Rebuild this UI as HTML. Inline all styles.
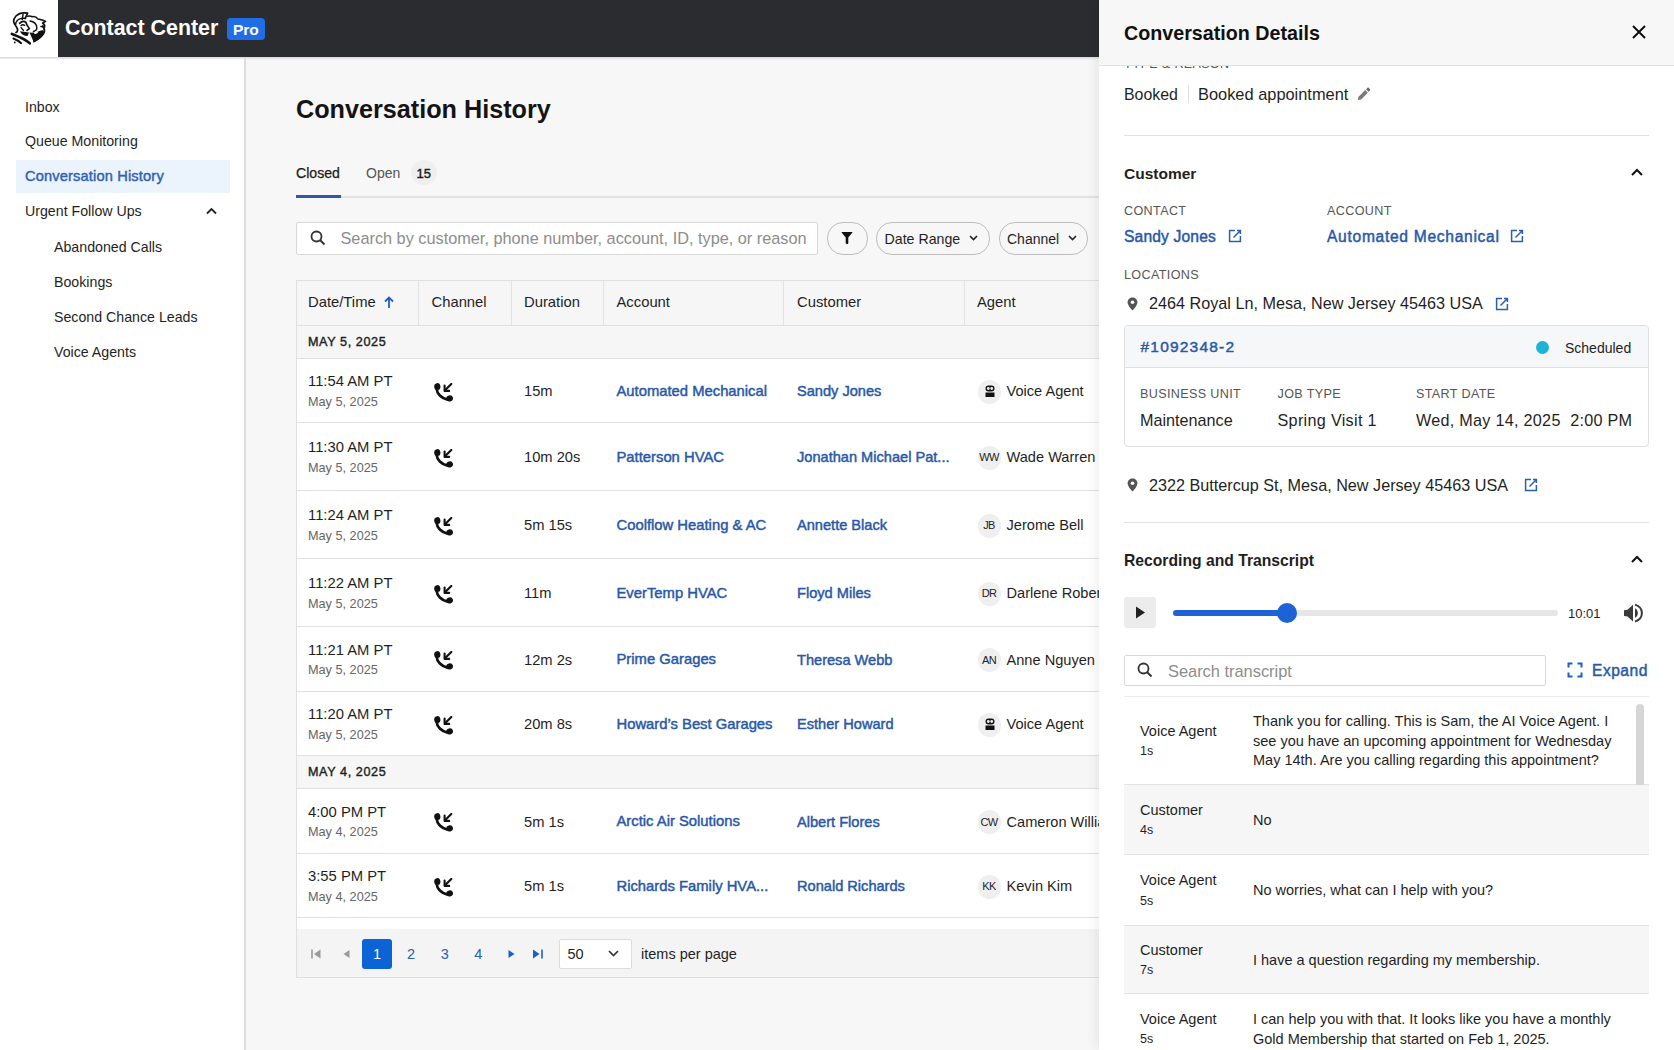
<!DOCTYPE html>
<html><head><meta charset="utf-8">
<style>
*{box-sizing:border-box}
html,body{margin:0;padding:0}
body{width:1674px;height:1050px;overflow:hidden;position:relative;background:#f7f7f7;font-family:"Liberation Sans",sans-serif;color:#1f1f1f}
.a{position:absolute}
.t{position:absolute;white-space:nowrap;line-height:1}
.b{font-weight:bold}
.lnk{color:#2858a8;font-weight:bold}
.sb{color:#2858a8;font-weight:normal;-webkit-text-stroke:0.45px #2858a8}
.hl{position:absolute;background:#e2e2e2}
.vl{position:absolute;background:#e2e2e2}
</style></head>
<body>
<!-- TOP BAR -->
<div class="a" style="left:0;top:0;width:1674px;height:57px;background:#2b2c30"></div>
<div class="a" style="left:0;top:57px;width:1674px;height:3px;background:linear-gradient(#d9d9d9,rgba(247,247,247,0))"></div>
<div class="a" style="left:0;top:0;width:58px;height:57px;background:#fff"></div>
<!--LOGO--><svg class="a" style="left:0;top:0" width="58" height="57" viewBox="0 0 58 57">
<g fill="none" stroke="#111" stroke-linecap="round" stroke-linejoin="round">
<path d="M16 32.6 C18 31.5 18 29.5 16.5 27 C13.5 23 12 20.5 16 16 C19 13 23 12.3 27.6 13.2 L25.3 18.2" stroke-width="1.7"/>
<path d="M15.6 24.4 C15.8 21.5 17.5 19.5 20.5 18.6 C22.5 18 24 18 25.5 18.5" stroke-width="1.5"/>
<path d="M23 14.5 L22.2 19.5" stroke-width="1.5"/>
<path d="M19.6 23.4 C21 21.8 22.5 21.2 24 21.4 C25.5 21.7 26.5 23 26.8 24.8 L29.4 28.6 L27 30.4" stroke-width="1.6"/>
<path d="M21 25.5 C22 24.6 23.5 24.6 24.6 25.4" stroke-width="1.3"/>
<path d="M21 27.5 L23.5 30.5" stroke-width="1.2"/>
<path d="M27.8 16.2 C29.5 15.8 31 16 32.2 16.8 C34 16 36.5 17.2 38 19 C40 19.5 43 20 45.6 21.4 L42.6 23 C44 24 45 25.5 44.6 27 L41 26.5" stroke-width="1.6"/>
<path d="M42.8 26 C44.5 28.5 45 31 43.5 33.5 C41.5 37 38 39.5 34 41.5" stroke-width="1.9"/>
<path d="M30 21 C33.5 21.5 36.5 24 36.8 27.5 C37 29.5 35.5 31 33.5 31.5" stroke-width="1.4"/>
<path d="M11.8 33.8 C15 35.5 19 36.5 22.5 38.5 C25.5 40 28 41.8 29.8 43.3" stroke-width="2.6"/>
<path d="M13.4 38.5 C16 39.5 19 41.2 21.2 43.2" stroke-width="2"/>
</g>
<circle cx="14.8" cy="42.4" r="0.9" fill="#111"/>
<path d="M20 31.2 C21 34 24 36 27.6 36 L29 32.5 L25.5 32 Z" fill="#111"/>
<path d="M29.5 32.5 C33 33 38 32 42.5 30 L44 32 C42 36.5 38 40.5 33.8 42.2 C32.5 39 31 36 29.5 32.5 Z" fill="#111"/>
<ellipse cx="36" cy="32.6" rx="2.2" ry="1.2" transform="rotate(-20 36 32.6)" fill="#fff"/>
</svg>
<div class="t b" style="left:65px;top:17.5px;font-size:21.4px;color:#fff">Contact Center</div>
<div class="a" style="left:227px;top:18px;width:38px;height:22px;background:#1f6ee6;border-radius:4px"></div>
<div class="t b" style="left:233px;top:21.5px;font-size:15.5px;color:#fff">Pro</div>

<!-- SIDEBAR -->
<div class="a" style="left:0;top:59px;width:245px;height:991px;background:#fff"></div>
<div class="a" style="left:244px;top:57px;width:2px;height:993px;background:#dcdcdc"></div>
<div class="t" style="left:25px;top:99.5px;font-size:14.2px">Inbox</div>
<div class="t" style="left:25px;top:134.3px;font-size:14.2px">Queue Monitoring</div>
<div class="a" style="left:16px;top:160px;width:214px;height:33px;background:#ebf3fd"></div>
<div class="t sb" style="left:25px;top:168.6px;font-size:14.6px;letter-spacing:0.17px;color:#2f63b5;-webkit-text-stroke-color:#2f63b5">Conversation History</div>
<div class="t" style="left:25px;top:204px;font-size:14.2px">Urgent Follow Ups</div>
<svg class="a" style="left:205px;top:206px" width="13" height="10" viewBox="0 0 13 10"><path d="M2 7.5 L6.5 3 L11 7.5" fill="none" stroke="#222" stroke-width="1.8"/></svg>
<div class="t" style="left:54px;top:240.1px;font-size:14.2px">Abandoned Calls</div>
<div class="t" style="left:54px;top:275.1px;font-size:14.2px">Bookings</div>
<div class="t" style="left:54px;top:310px;font-size:14.2px">Second Chance Leads</div>
<div class="t" style="left:54px;top:344.9px;font-size:14.2px">Voice Agents</div>

<!-- MAIN -->
<div class="t b" style="left:296px;top:97.3px;font-size:25.2px;color:#141414">Conversation History</div>
<div class="t" style="left:296px;top:165.8px;font-size:14.1px;color:#1a1a1a;-webkit-text-stroke:0.25px #1a1a1a">Closed</div>
<div class="t" style="left:366px;top:165.8px;font-size:14px;color:#555">Open</div>
<div class="a" style="left:411px;top:160px;width:26px;height:25px;border-radius:13px;background:#efefef"></div>
<div class="t" style="left:416.5px;top:166.8px;font-size:13px;color:#1a1a1a;-webkit-text-stroke:0.4px #1a1a1a">15</div>
<div class="a" style="left:296px;top:196px;width:803px;height:2px;background:#e2e2e2"></div>
<div class="a" style="left:296px;top:195px;width:45px;height:3px;background:#30599f"></div>

<div class="a" style="left:296px;top:222px;width:522px;height:33px;background:#fff;border:1px solid #d8d8d8;border-radius:2px"></div>
<svg class="a" style="left:309px;top:229px" width="18" height="18" viewBox="0 0 18 18"><circle cx="7.5" cy="7.5" r="5" fill="none" stroke="#333" stroke-width="1.8"/><path d="M11 11 L15.5 15.5" stroke="#333" stroke-width="2"/></svg>
<div class="t" style="left:340.5px;top:229.8px;font-size:16.3px;color:#8d8d8d">Search by customer, phone number, account, ID, type, or reason</div>

<div class="a" style="left:827px;top:222px;width:41px;height:33px;border:1px solid #bdbdbd;border-radius:16px"></div>
<svg class="a" style="left:839px;top:230px" width="16" height="16" viewBox="0 0 16 16"><path d="M2.8 2 H13.2 C13.5 2 13.6 2.3 13.4 2.6 L9.3 7.6 V13 C9.3 14.6 6.7 14.6 6.7 13 V7.6 L2.6 2.6 C2.4 2.3 2.5 2 2.8 2 Z" fill="#111"/></svg>
<div class="a" style="left:876px;top:222px;width:114px;height:33px;border:1px solid #bdbdbd;border-radius:16px"></div>
<div class="t" style="left:884.5px;top:232.2px;font-size:14.2px">Date Range</div>
<svg class="a" style="left:968px;top:234px" width="11" height="8" viewBox="0 0 11 8"><path d="M2 2 L5.5 5.5 L9 2" fill="none" stroke="#222" stroke-width="1.6"/></svg>
<div class="a" style="left:999px;top:222px;width:89px;height:33px;border:1px solid #bdbdbd;border-radius:16px"></div>
<div class="t" style="left:1007px;top:232.2px;font-size:14px">Channel</div>
<svg class="a" style="left:1067px;top:234px" width="11" height="8" viewBox="0 0 11 8"><path d="M2 2 L5.5 5.5 L9 2" fill="none" stroke="#222" stroke-width="1.6"/></svg>

<!--TABLE-->
<div class="a" style="left:296px;top:280px;width:900px;height:46px;background:#f6f6f6;border-top:1px solid #e0e0e0;border-bottom:1px solid #e0e0e0"></div>
<div class="a" style="left:296px;top:280px;width:1px;height:698px;background:#e0e0e0"></div>
<div class="vl" style="left:418px;top:281px;width:1px;height:44px"></div>
<div class="vl" style="left:511px;top:281px;width:1px;height:44px"></div>
<div class="vl" style="left:603px;top:281px;width:1px;height:44px"></div>
<div class="vl" style="left:783px;top:281px;width:1px;height:44px"></div>
<div class="vl" style="left:964px;top:281px;width:1px;height:44px"></div>
<div class="t" style="left:308px;top:295.07px;font-size:14.8px;color:#1f1f1f">Date/Time</div>
<div class="t" style="left:431.5px;top:295.07px;font-size:14.8px;color:#1f1f1f">Channel</div>
<div class="t" style="left:524px;top:295.07px;font-size:14.8px;color:#1f1f1f">Duration</div>
<div class="t" style="left:616.5px;top:295.07px;font-size:14.8px;color:#1f1f1f">Account</div>
<div class="t" style="left:797px;top:295.07px;font-size:14.8px;color:#1f1f1f">Customer</div>
<div class="t" style="left:977px;top:295.07px;font-size:14.8px;color:#1f1f1f">Agent</div>
<svg class="a" style="left:383px;top:295px" width="12" height="14" viewBox="0 0 12 14"><path d="M6 13 V2.5 M2 6.5 L6 2.5 L10 6.5" fill="none" stroke="#1f5fc4" stroke-width="1.8"/></svg>
<div class="a" style="left:297px;top:326px;width:900px;height:33px;background:#f6f6f6;border-bottom:1px solid #e0e0e0"></div>
<div class="t" style="left:308px;top:336.20px;font-size:12.6px;letter-spacing:0.6px;color:#1f1f1f;-webkit-text-stroke:0.4px #1f1f1f">MAY 5, 2025</div>
<div class="a" style="left:297px;top:756px;width:900px;height:33px;background:#f6f6f6;border-bottom:1px solid #e0e0e0"></div>
<div class="t" style="left:308px;top:766.20px;font-size:12.6px;letter-spacing:0.6px;color:#1f1f1f;-webkit-text-stroke:0.4px #1f1f1f">MAY 4, 2025</div>
<div class="a" style="left:297px;top:359px;width:900px;height:64px;background:#fff;border-bottom:1px solid #e2e2e2"></div>
<div class="t" style="left:308px;top:374.47px;font-size:14.8px;color:#1f1f1f">11:54 AM PT</div>
<div class="t" style="left:308px;top:395.75px;font-size:12.7px;color:#666">May 5, 2025</div>
<svg class="a" style="left:434px;top:382.50px" width="19" height="19" viewBox="0 0 19 19"><ellipse cx="3.3" cy="3.6" rx="3.1" ry="3.5" transform="rotate(-10 3.3 3.6)" fill="#111"/><ellipse cx="15.6" cy="15.4" rx="3.4" ry="3.1" transform="rotate(-15 15.6 15.4)" fill="#111"/><path d="M2.6 5.5 C2.8 10.5 7.5 15.5 13.5 16.6" fill="none" stroke="#111" stroke-width="2.7"/><path d="M17.3 0.9 L11.5 6.8" stroke="#111" stroke-width="2.1" stroke-linecap="round"/><path d="M10.6 2.6 V7.9 H15.2" fill="none" stroke="#111" stroke-width="2.1" stroke-linecap="round" stroke-linejoin="round"/></svg>
<div class="t" style="left:524px;top:384.06px;font-size:14.7px;color:#1f1f1f">15m</div>
<div class="t sb" style="left:616.5px;top:383.97px;font-size:14.8px">Automated Mechanical</div>
<div class="t sb" style="left:797px;top:384.14px;font-size:14.6px">Sandy Jones</div>
<div class="a" style="left:977.5px;top:379.50px;width:23px;height:24px;border-radius:12px;background:#efefef"></div>
<svg class="a" style="left:983px;top:384.00px" width="14" height="14" viewBox="0 0 14 14"><rect x="2.5" y="1.5" width="9" height="6" rx="3" fill="#111"/><circle cx="5.3" cy="4.5" r="1.4" fill="#eee"/><circle cx="8.7" cy="4.5" r="1.4" fill="#eee"/><rect x="2.5" y="8.5" width="9" height="4.5" fill="#111"/></svg>
<div class="t" style="left:1006.5px;top:384.14px;font-size:14.6px;color:#1f1f1f">Voice Agent</div>
<div class="a" style="left:297px;top:423px;width:900px;height:68px;background:#fff;border-bottom:1px solid #e2e2e2"></div>
<div class="t" style="left:308px;top:440.47px;font-size:14.8px;color:#1f1f1f">11:30 AM PT</div>
<div class="t" style="left:308px;top:461.75px;font-size:12.7px;color:#666">May 5, 2025</div>
<svg class="a" style="left:434px;top:448.50px" width="19" height="19" viewBox="0 0 19 19"><ellipse cx="3.3" cy="3.6" rx="3.1" ry="3.5" transform="rotate(-10 3.3 3.6)" fill="#111"/><ellipse cx="15.6" cy="15.4" rx="3.4" ry="3.1" transform="rotate(-15 15.6 15.4)" fill="#111"/><path d="M2.6 5.5 C2.8 10.5 7.5 15.5 13.5 16.6" fill="none" stroke="#111" stroke-width="2.7"/><path d="M17.3 0.9 L11.5 6.8" stroke="#111" stroke-width="2.1" stroke-linecap="round"/><path d="M10.6 2.6 V7.9 H15.2" fill="none" stroke="#111" stroke-width="2.1" stroke-linecap="round" stroke-linejoin="round"/></svg>
<div class="t" style="left:524px;top:450.06px;font-size:14.7px;color:#1f1f1f">10m 20s</div>
<div class="t sb" style="left:616.5px;top:449.97px;font-size:14.8px">Patterson HVAC</div>
<div class="t sb" style="left:797px;top:450.14px;font-size:14.6px">Jonathan Michael Pat...</div>
<div class="a" style="left:977.5px;top:445.50px;width:23px;height:24px;border-radius:12px;background:#efefef"></div>
<div class="t" style="left:977.5px;width:23px;text-align:center;top:452.00px;font-size:11px;letter-spacing:-0.6px;color:#222">WW</div>
<div class="t" style="left:1006.5px;top:450.14px;font-size:14.6px;color:#1f1f1f">Wade Warren</div>
<div class="a" style="left:297px;top:491px;width:900px;height:68px;background:#fff;border-bottom:1px solid #e2e2e2"></div>
<div class="t" style="left:308px;top:508.47px;font-size:14.8px;color:#1f1f1f">11:24 AM PT</div>
<div class="t" style="left:308px;top:529.75px;font-size:12.7px;color:#666">May 5, 2025</div>
<svg class="a" style="left:434px;top:516.50px" width="19" height="19" viewBox="0 0 19 19"><ellipse cx="3.3" cy="3.6" rx="3.1" ry="3.5" transform="rotate(-10 3.3 3.6)" fill="#111"/><ellipse cx="15.6" cy="15.4" rx="3.4" ry="3.1" transform="rotate(-15 15.6 15.4)" fill="#111"/><path d="M2.6 5.5 C2.8 10.5 7.5 15.5 13.5 16.6" fill="none" stroke="#111" stroke-width="2.7"/><path d="M17.3 0.9 L11.5 6.8" stroke="#111" stroke-width="2.1" stroke-linecap="round"/><path d="M10.6 2.6 V7.9 H15.2" fill="none" stroke="#111" stroke-width="2.1" stroke-linecap="round" stroke-linejoin="round"/></svg>
<div class="t" style="left:524px;top:518.06px;font-size:14.7px;color:#1f1f1f">5m 15s</div>
<div class="t sb" style="left:616.5px;top:517.97px;font-size:14.8px">Coolflow Heating &amp; AC</div>
<div class="t sb" style="left:797px;top:518.14px;font-size:14.6px">Annette Black</div>
<div class="a" style="left:977.5px;top:513.50px;width:23px;height:24px;border-radius:12px;background:#efefef"></div>
<div class="t" style="left:977.5px;width:23px;text-align:center;top:520.00px;font-size:11px;letter-spacing:-0.6px;color:#222">JB</div>
<div class="t" style="left:1006.5px;top:518.14px;font-size:14.6px;color:#1f1f1f">Jerome Bell</div>
<div class="a" style="left:297px;top:559px;width:900px;height:68px;background:#fff;border-bottom:1px solid #e2e2e2"></div>
<div class="t" style="left:308px;top:576.47px;font-size:14.8px;color:#1f1f1f">11:22 AM PT</div>
<div class="t" style="left:308px;top:597.75px;font-size:12.7px;color:#666">May 5, 2025</div>
<svg class="a" style="left:434px;top:584.50px" width="19" height="19" viewBox="0 0 19 19"><ellipse cx="3.3" cy="3.6" rx="3.1" ry="3.5" transform="rotate(-10 3.3 3.6)" fill="#111"/><ellipse cx="15.6" cy="15.4" rx="3.4" ry="3.1" transform="rotate(-15 15.6 15.4)" fill="#111"/><path d="M2.6 5.5 C2.8 10.5 7.5 15.5 13.5 16.6" fill="none" stroke="#111" stroke-width="2.7"/><path d="M17.3 0.9 L11.5 6.8" stroke="#111" stroke-width="2.1" stroke-linecap="round"/><path d="M10.6 2.6 V7.9 H15.2" fill="none" stroke="#111" stroke-width="2.1" stroke-linecap="round" stroke-linejoin="round"/></svg>
<div class="t" style="left:524px;top:586.06px;font-size:14.7px;color:#1f1f1f">11m</div>
<div class="t sb" style="left:616.5px;top:585.97px;font-size:14.8px">EverTemp HVAC</div>
<div class="t sb" style="left:797px;top:586.14px;font-size:14.6px">Floyd Miles</div>
<div class="a" style="left:977.5px;top:581.50px;width:23px;height:24px;border-radius:12px;background:#efefef"></div>
<div class="t" style="left:977.5px;width:23px;text-align:center;top:588.00px;font-size:11px;letter-spacing:-0.6px;color:#222">DR</div>
<div class="t" style="left:1006.5px;top:586.14px;font-size:14.6px;color:#1f1f1f">Darlene Robertson</div>
<div class="a" style="left:297px;top:627px;width:900px;height:65px;background:#fff;border-bottom:1px solid #e2e2e2"></div>
<div class="t" style="left:308px;top:642.97px;font-size:14.8px;color:#1f1f1f">11:21 AM PT</div>
<div class="t" style="left:308px;top:664.25px;font-size:12.7px;color:#666">May 5, 2025</div>
<svg class="a" style="left:434px;top:651.00px" width="19" height="19" viewBox="0 0 19 19"><ellipse cx="3.3" cy="3.6" rx="3.1" ry="3.5" transform="rotate(-10 3.3 3.6)" fill="#111"/><ellipse cx="15.6" cy="15.4" rx="3.4" ry="3.1" transform="rotate(-15 15.6 15.4)" fill="#111"/><path d="M2.6 5.5 C2.8 10.5 7.5 15.5 13.5 16.6" fill="none" stroke="#111" stroke-width="2.7"/><path d="M17.3 0.9 L11.5 6.8" stroke="#111" stroke-width="2.1" stroke-linecap="round"/><path d="M10.6 2.6 V7.9 H15.2" fill="none" stroke="#111" stroke-width="2.1" stroke-linecap="round" stroke-linejoin="round"/></svg>
<div class="t" style="left:524px;top:652.56px;font-size:14.7px;color:#1f1f1f">12m 2s</div>
<div class="t sb" style="left:616.5px;top:652.47px;font-size:14.8px">Prime Garages</div>
<div class="t sb" style="left:797px;top:652.64px;font-size:14.6px">Theresa Webb</div>
<div class="a" style="left:977.5px;top:648.00px;width:23px;height:24px;border-radius:12px;background:#efefef"></div>
<div class="t" style="left:977.5px;width:23px;text-align:center;top:654.50px;font-size:11px;letter-spacing:-0.6px;color:#222">AN</div>
<div class="t" style="left:1006.5px;top:652.64px;font-size:14.6px;color:#1f1f1f">Anne Nguyen</div>
<div class="a" style="left:297px;top:692px;width:900px;height:64px;background:#fff;border-bottom:1px solid #e2e2e2"></div>
<div class="t" style="left:308px;top:707.47px;font-size:14.8px;color:#1f1f1f">11:20 AM PT</div>
<div class="t" style="left:308px;top:728.75px;font-size:12.7px;color:#666">May 5, 2025</div>
<svg class="a" style="left:434px;top:715.50px" width="19" height="19" viewBox="0 0 19 19"><ellipse cx="3.3" cy="3.6" rx="3.1" ry="3.5" transform="rotate(-10 3.3 3.6)" fill="#111"/><ellipse cx="15.6" cy="15.4" rx="3.4" ry="3.1" transform="rotate(-15 15.6 15.4)" fill="#111"/><path d="M2.6 5.5 C2.8 10.5 7.5 15.5 13.5 16.6" fill="none" stroke="#111" stroke-width="2.7"/><path d="M17.3 0.9 L11.5 6.8" stroke="#111" stroke-width="2.1" stroke-linecap="round"/><path d="M10.6 2.6 V7.9 H15.2" fill="none" stroke="#111" stroke-width="2.1" stroke-linecap="round" stroke-linejoin="round"/></svg>
<div class="t" style="left:524px;top:717.06px;font-size:14.7px;color:#1f1f1f">20m 8s</div>
<div class="t sb" style="left:616.5px;top:716.97px;font-size:14.8px">Howard’s Best Garages</div>
<div class="t sb" style="left:797px;top:717.14px;font-size:14.6px">Esther Howard</div>
<div class="a" style="left:977.5px;top:712.50px;width:23px;height:24px;border-radius:12px;background:#efefef"></div>
<svg class="a" style="left:983px;top:717.00px" width="14" height="14" viewBox="0 0 14 14"><rect x="2.5" y="1.5" width="9" height="6" rx="3" fill="#111"/><circle cx="5.3" cy="4.5" r="1.4" fill="#eee"/><circle cx="8.7" cy="4.5" r="1.4" fill="#eee"/><rect x="2.5" y="8.5" width="9" height="4.5" fill="#111"/></svg>
<div class="t" style="left:1006.5px;top:717.14px;font-size:14.6px;color:#1f1f1f">Voice Agent</div>
<div class="a" style="left:297px;top:789px;width:900px;height:65px;background:#fff;border-bottom:1px solid #e2e2e2"></div>
<div class="t" style="left:308px;top:804.97px;font-size:14.8px;color:#1f1f1f">4:00 PM PT</div>
<div class="t" style="left:308px;top:826.25px;font-size:12.7px;color:#666">May 4, 2025</div>
<svg class="a" style="left:434px;top:813.00px" width="19" height="19" viewBox="0 0 19 19"><ellipse cx="3.3" cy="3.6" rx="3.1" ry="3.5" transform="rotate(-10 3.3 3.6)" fill="#111"/><ellipse cx="15.6" cy="15.4" rx="3.4" ry="3.1" transform="rotate(-15 15.6 15.4)" fill="#111"/><path d="M2.6 5.5 C2.8 10.5 7.5 15.5 13.5 16.6" fill="none" stroke="#111" stroke-width="2.7"/><path d="M17.3 0.9 L11.5 6.8" stroke="#111" stroke-width="2.1" stroke-linecap="round"/><path d="M10.6 2.6 V7.9 H15.2" fill="none" stroke="#111" stroke-width="2.1" stroke-linecap="round" stroke-linejoin="round"/></svg>
<div class="t" style="left:524px;top:814.56px;font-size:14.7px;color:#1f1f1f">5m 1s</div>
<div class="t sb" style="left:616.5px;top:814.47px;font-size:14.8px">Arctic Air Solutions</div>
<div class="t sb" style="left:797px;top:814.64px;font-size:14.6px">Albert Flores</div>
<div class="a" style="left:977.5px;top:810.00px;width:23px;height:24px;border-radius:12px;background:#efefef"></div>
<div class="t" style="left:977.5px;width:23px;text-align:center;top:816.50px;font-size:11px;letter-spacing:-0.6px;color:#222">CW</div>
<div class="t" style="left:1006.5px;top:814.64px;font-size:14.6px;color:#1f1f1f">Cameron Williamson</div>
<div class="a" style="left:297px;top:854px;width:900px;height:64px;background:#fff;border-bottom:1px solid #e2e2e2"></div>
<div class="t" style="left:308px;top:869.47px;font-size:14.8px;color:#1f1f1f">3:55 PM PT</div>
<div class="t" style="left:308px;top:890.75px;font-size:12.7px;color:#666">May 4, 2025</div>
<svg class="a" style="left:434px;top:877.50px" width="19" height="19" viewBox="0 0 19 19"><ellipse cx="3.3" cy="3.6" rx="3.1" ry="3.5" transform="rotate(-10 3.3 3.6)" fill="#111"/><ellipse cx="15.6" cy="15.4" rx="3.4" ry="3.1" transform="rotate(-15 15.6 15.4)" fill="#111"/><path d="M2.6 5.5 C2.8 10.5 7.5 15.5 13.5 16.6" fill="none" stroke="#111" stroke-width="2.7"/><path d="M17.3 0.9 L11.5 6.8" stroke="#111" stroke-width="2.1" stroke-linecap="round"/><path d="M10.6 2.6 V7.9 H15.2" fill="none" stroke="#111" stroke-width="2.1" stroke-linecap="round" stroke-linejoin="round"/></svg>
<div class="t" style="left:524px;top:879.06px;font-size:14.7px;color:#1f1f1f">5m 1s</div>
<div class="t sb" style="left:616.5px;top:878.97px;font-size:14.8px">Richards Family HVA...</div>
<div class="t sb" style="left:797px;top:879.14px;font-size:14.6px">Ronald Richards</div>
<div class="a" style="left:977.5px;top:874.50px;width:23px;height:24px;border-radius:12px;background:#efefef"></div>
<div class="t" style="left:977.5px;width:23px;text-align:center;top:881.00px;font-size:11px;letter-spacing:-0.6px;color:#222">KK</div>
<div class="t" style="left:1006.5px;top:879.14px;font-size:14.6px;color:#1f1f1f">Kevin Kim</div>
<div class="a" style="left:297px;top:918px;width:900px;height:11px;background:#fff"></div>
<div class="a" style="left:297px;top:929px;width:900px;height:49px;background:#f4f4f4;border-bottom:1px solid #dedede"></div>
<svg class="a" style="left:310px;top:948px" width="12" height="12" viewBox="0 0 12 12"><path d="M2 1.5 V10.5" stroke="#9a9a9a" stroke-width="1.6"/><path d="M10.5 1.5 V10.5 L4 6 Z" fill="#9a9a9a"/></svg>
<svg class="a" style="left:340px;top:948px" width="12" height="12" viewBox="0 0 12 12"><path d="M9.5 2 V10 L3.5 6 Z" fill="#9a9a9a"/></svg>
<div class="a" style="left:362px;top:938.5px;width:30px;height:30px;background:#0b63d6;border-radius:3px"></div>
<div class="t" style="left:362px;width:30px;text-align:center;top:947px;font-size:14.5px;color:#fff">1</div>
<div class="t" style="left:396px;width:30px;text-align:center;top:947px;font-size:14.5px;color:#2a5fb0">2</div>
<div class="t" style="left:429.8px;width:30px;text-align:center;top:947px;font-size:14.5px;color:#2a5fb0">3</div>
<div class="t" style="left:463.4px;width:30px;text-align:center;top:947px;font-size:14.5px;color:#2a5fb0">4</div>
<svg class="a" style="left:506px;top:948px" width="12" height="12" viewBox="0 0 12 12"><path d="M2.5 2 V10 L8.5 6 Z" fill="#1f5fc4"/></svg>
<svg class="a" style="left:531px;top:948px" width="13" height="12" viewBox="0 0 13 12"><path d="M11 1.5 V10.5" stroke="#1f5fc4" stroke-width="1.6"/><path d="M2 1.5 V10.5 L8.5 6 Z" fill="#1f5fc4"/></svg>
<div class="a" style="left:559px;top:938.5px;width:73px;height:30px;background:#fff;border:1px solid #dcdcdc;border-radius:2px"></div>
<div class="t" style="left:567.5px;top:947px;font-size:14.5px;color:#1f1f1f">50</div>
<svg class="a" style="left:607px;top:949px" width="13" height="9" viewBox="0 0 13 9"><path d="M2 2 L6.5 6.5 L11 2" fill="none" stroke="#333" stroke-width="1.7"/></svg>
<div class="t" style="left:641px;top:947px;font-size:14.5px;color:#1f1f1f">items per page</div>
<!--DRAWER-->
<div class="a" style="left:1099px;top:0;width:575px;height:1050px;background:#fff;box-shadow:-2px 0 12px rgba(0,0,0,0.08)"></div>
<div class="t" style="left:1124px;top:58.42px;font-size:12.5px;color:#555;letter-spacing:0.35px">TYPE &amp; REASON</div>
<div class="t" style="left:1124px;top:86.54px;font-size:15.9px;">Booked</div>
<div class="a" style="left:1188px;top:85px;width:1px;height:18px;background:#dedede"></div>
<div class="t" style="left:1198px;top:86.12px;font-size:16.4px;">Booked appointment</div>
<svg class="a" style="left:1356px;top:86px" width="15" height="15" viewBox="0 0 15 15"><path d="M1.8 13.9 L2.4 10.9 L9.2 4.1 L11.9 6.8 L5.1 13.6 Z" fill="#7a7a7a"/><path d="M10.1 3.2 L11.4 1.9 C11.8 1.5 12.4 1.5 12.8 1.9 L13.9 3 C14.3 3.4 14.3 4 13.9 4.4 L12.6 5.7 Z" fill="#666"/></svg>
<div class="a" style="left:1124px;top:135px;width:525px;height:1px;background:#e2e2e2"></div>
<div class="t b" style="left:1124px;top:165.98px;font-size:15.5px;">Customer</div>
<svg class="a" style="left:1630px;top:167px" width="14" height="10" viewBox="0 0 14 10"><path d="M2 8 L7 3 L12 8" fill="none" stroke="#111" stroke-width="2"/></svg>
<div class="t" style="left:1124px;top:205.33px;font-size:12.6px;color:#555;letter-spacing:0.35px">CONTACT</div>
<div class="t" style="left:1327px;top:205.33px;font-size:12.6px;color:#555;letter-spacing:0.35px">ACCOUNT</div>
<div class="t sb" style="left:1124px;top:229.19px;font-size:15.6px;letter-spacing:0.16px">Sandy Jones</div>
<svg class="a" style="left:1227.5px;top:229px" width="14" height="14" viewBox="0 0 14 14"><path d="M7 1.6 H1.6 V12.4 H12.4 V7" fill="none" stroke="#2a5fb0" stroke-width="1.5"/><path d="M9 1.6 H12.4 V5 M12.2 1.8 L5.5 8.5" fill="none" stroke="#2a5fb0" stroke-width="1.5"/></svg>
<div class="t sb" style="left:1327px;top:229.19px;font-size:15.6px;letter-spacing:0.7px">Automated Mechanical</div>
<svg class="a" style="left:1510px;top:229px" width="14" height="14" viewBox="0 0 14 14"><path d="M7 1.6 H1.6 V12.4 H12.4 V7" fill="none" stroke="#2a5fb0" stroke-width="1.5"/><path d="M9 1.6 H12.4 V5 M12.2 1.8 L5.5 8.5" fill="none" stroke="#2a5fb0" stroke-width="1.5"/></svg>
<div class="t" style="left:1124px;top:269.03px;font-size:12.6px;color:#555;letter-spacing:0.35px">LOCATIONS</div>
<svg class="a" style="left:1126.5px;top:297px" width="11" height="14" viewBox="0 0 11 14"><path d="M5.5 0.5 C2.7 0.5 0.6 2.6 0.6 5.3 C0.6 8.8 5.5 13.5 5.5 13.5 C5.5 13.5 10.4 8.8 10.4 5.3 C10.4 2.6 8.3 0.5 5.5 0.5 Z" fill="#555"/><circle cx="5.5" cy="5.2" r="1.8" fill="#fff"/></svg>
<div class="t" style="left:1149px;top:295.29px;font-size:16.2px;">2464 Royal Ln, Mesa, New Jersey 45463 USA</div>
<svg class="a" style="left:1495px;top:297px" width="14" height="14" viewBox="0 0 14 14"><path d="M7 1.6 H1.6 V12.4 H12.4 V7" fill="none" stroke="#2a5fb0" stroke-width="1.5"/><path d="M9 1.6 H12.4 V5 M12.2 1.8 L5.5 8.5" fill="none" stroke="#2a5fb0" stroke-width="1.5"/></svg>
<div class="a" style="left:1124px;top:325px;width:525px;height:122px;border:1px solid #e0e0e0;border-radius:4px;overflow:hidden"><div class="a" style="left:0;top:0;width:525px;height:42px;background:#f6f7f8;border-bottom:1px solid #e0e0e0"></div></div>
<div class="t sb" style="left:1140.5px;top:339.38px;font-size:15.5px;letter-spacing:1.2px">#1092348-2</div>
<div class="a" style="left:1536px;top:341px;width:13px;height:13px;border-radius:7px;background:#1cb3d6"></div>
<div class="t" style="left:1565px;top:340.65px;font-size:14px;">Scheduled</div>
<div class="t" style="left:1140px;top:387.83px;font-size:12.6px;color:#555;letter-spacing:0.35px">BUSINESS UNIT</div>
<div class="t" style="left:1277.5px;top:387.83px;font-size:12.6px;color:#555;letter-spacing:0.35px">JOB TYPE</div>
<div class="t" style="left:1416px;top:387.83px;font-size:12.6px;color:#555;letter-spacing:0.35px">START DATE</div>
<div class="t" style="left:1140px;top:411.89px;font-size:16.2px;">Maintenance</div>
<div class="t" style="left:1277.5px;top:411.89px;font-size:16.2px;letter-spacing:0.3px">Spring Visit 1</div>
<div class="t" style="left:1416px;top:411.89px;font-size:16.2px;letter-spacing:0.27px">Wed, May 14, 2025&nbsp; 2:00 PM</div>
<svg class="a" style="left:1126.5px;top:478px" width="11" height="14" viewBox="0 0 11 14"><path d="M5.5 0.5 C2.7 0.5 0.6 2.6 0.6 5.3 C0.6 8.8 5.5 13.5 5.5 13.5 C5.5 13.5 10.4 8.8 10.4 5.3 C10.4 2.6 8.3 0.5 5.5 0.5 Z" fill="#555"/><circle cx="5.5" cy="5.2" r="1.8" fill="#fff"/></svg>
<div class="t" style="left:1149px;top:476.99px;font-size:16.2px;">2322 Buttercup St, Mesa, New Jersey 45463 USA</div>
<svg class="a" style="left:1524px;top:478px" width="14" height="14" viewBox="0 0 14 14"><path d="M7 1.6 H1.6 V12.4 H12.4 V7" fill="none" stroke="#2a5fb0" stroke-width="1.5"/><path d="M9 1.6 H12.4 V5 M12.2 1.8 L5.5 8.5" fill="none" stroke="#2a5fb0" stroke-width="1.5"/></svg>
<div class="a" style="left:1124px;top:522px;width:525px;height:1px;background:#e2e2e2"></div>
<div class="t b" style="left:1124px;top:553.21px;font-size:15.7px;">Recording and Transcript</div>
<svg class="a" style="left:1630px;top:554px" width="14" height="10" viewBox="0 0 14 10"><path d="M2 8 L7 3 L12 8" fill="none" stroke="#111" stroke-width="2"/></svg>
<div class="a" style="left:1124px;top:597px;width:32px;height:31px;background:#ececec;border-radius:3px"></div>
<svg class="a" style="left:1132px;top:604px" width="16" height="17" viewBox="0 0 16 17"><path d="M4 2.5 V14.5 L13 8.5 Z" fill="#222"/></svg>
<div class="a" style="left:1173px;top:610px;width:385px;height:6px;border-radius:3px;background:#e6e6e6"></div>
<div class="a" style="left:1173px;top:610px;width:114px;height:6px;border-radius:3px;background:#1e62d8"></div>
<div class="a" style="left:1277px;top:603px;width:20px;height:20px;border-radius:10px;background:#1e62d8"></div>
<div class="t" style="left:1568px;top:606.50px;font-size:13px;">10:01</div>
<svg class="a" style="left:1622px;top:602px" width="22" height="22" viewBox="0 0 22 22"><path d="M2 8.2 L5.5 7.8 L11 2.8 V19.4 L5.5 14.4 L2 14 Z" fill="#3a3a3a"/><path d="M13 6.2 C15 7.6 15.9 9.2 15.9 11.1 C15.9 13 15 14.6 13 16 Z" fill="#3a3a3a"/><path d="M13 2.6 C17.3 3.9 19.9 7.3 19.9 11.1 C19.9 14.9 17.3 18.3 13 19.6" fill="none" stroke="#3a3a3a" stroke-width="2"/></svg>
<div class="a" style="left:1124px;top:655px;width:422px;height:31px;background:#fff;border:1px solid #d8d8d8;border-radius:2px"></div>
<svg class="a" style="left:1136px;top:661px" width="18" height="18" viewBox="0 0 18 18"><circle cx="7.5" cy="7.5" r="5" fill="none" stroke="#333" stroke-width="1.8"/><path d="M11 11 L15.5 15.5" stroke="#333" stroke-width="2"/></svg>
<div class="t" style="left:1168px;top:662.62px;font-size:16.4px;color:#8d8d8d">Search transcript</div>
<svg class="a" style="left:1567px;top:662px" width="16" height="16" viewBox="0 0 16 16"><path d="M1.5 5.5 V1.5 H5.5 M10.5 1.5 H14.5 V5.5 M14.5 10.5 V14.5 H10.5 M5.5 14.5 H1.5 V10.5" fill="none" stroke="#1f5fc4" stroke-width="2"/></svg>
<div class="t sb" style="left:1592px;top:663.29px;font-size:15.6px;letter-spacing:0.5px">Expand</div>
<div class="a" style="left:1124px;top:696px;width:525px;height:1px;background:#ececec"></div>
<div class="a" style="left:1124px;top:697px;width:525px;height:88px;background:#fff;border-bottom:1px solid #e3e3e3"></div>
<div class="t" style="left:1140px;top:723.73px;font-size:14.5px;">Voice Agent</div>
<div class="t" style="left:1140px;top:745.42px;font-size:12.5px;">1s</div>
<div class="t" style="left:1253px;top:714.13px;font-size:14.5px;">Thank you for calling. This is Sam, the AI Voice Agent. I</div>
<div class="t" style="left:1253px;top:733.73px;font-size:14.5px;">see you have an upcoming appointment for Wednesday</div>
<div class="t" style="left:1253px;top:753.33px;font-size:14.5px;">May 14th. Are you calling regarding this appointment?</div>
<div class="a" style="left:1124px;top:785px;width:525px;height:70px;background:#f6f6f6;border-bottom:1px solid #e3e3e3"></div>
<div class="t" style="left:1140px;top:802.73px;font-size:14.5px;">Customer</div>
<div class="t" style="left:1140px;top:824.42px;font-size:12.5px;">4s</div>
<div class="t" style="left:1253px;top:812.73px;font-size:14.5px;">No</div>
<div class="a" style="left:1124px;top:855px;width:525px;height:71px;background:#fff;border-bottom:1px solid #e3e3e3"></div>
<div class="t" style="left:1140px;top:873.23px;font-size:14.5px;">Voice Agent</div>
<div class="t" style="left:1140px;top:894.92px;font-size:12.5px;">5s</div>
<div class="t" style="left:1253px;top:883.23px;font-size:14.5px;">No worries, what can I help with you?</div>
<div class="a" style="left:1124px;top:926px;width:525px;height:68px;background:#f6f6f6;border-bottom:1px solid #e3e3e3"></div>
<div class="t" style="left:1140px;top:942.73px;font-size:14.5px;">Customer</div>
<div class="t" style="left:1140px;top:964.42px;font-size:12.5px;">7s</div>
<div class="t" style="left:1253px;top:952.73px;font-size:14.5px;">I have a question regarding my membership.</div>
<div class="a" style="left:1124px;top:994px;width:525px;height:70px;background:#fff;border-bottom:1px solid #e3e3e3"></div>
<div class="t" style="left:1140px;top:1011.73px;font-size:14.5px;">Voice Agent</div>
<div class="t" style="left:1140px;top:1033.42px;font-size:12.5px;">5s</div>
<div class="t" style="left:1253px;top:1011.93px;font-size:14.5px;">I can help you with that. It looks like you have a monthly</div>
<div class="t" style="left:1253px;top:1031.53px;font-size:14.5px;">Gold Membership that started on Feb 1, 2025.</div>
<div class="a" style="left:1636px;top:704px;width:8px;height:81px;border-radius:4px 4px 0 0;background:#d6d6d6"></div>
<div class="a" style="left:1099px;top:0;width:575px;height:66px;background:#f7f7f7;border-bottom:1px solid #e0e3e3"></div>
<div class="t b" style="left:1124px;top:24.12px;font-size:19.7px;color:#111">Conversation Details</div>
<svg class="a" style="left:1631px;top:24px" width="16" height="16" viewBox="0 0 16 16"><path d="M2 2 L14 14 M14 2 L2 14" stroke="#111" stroke-width="2"/></svg>
</body></html>
